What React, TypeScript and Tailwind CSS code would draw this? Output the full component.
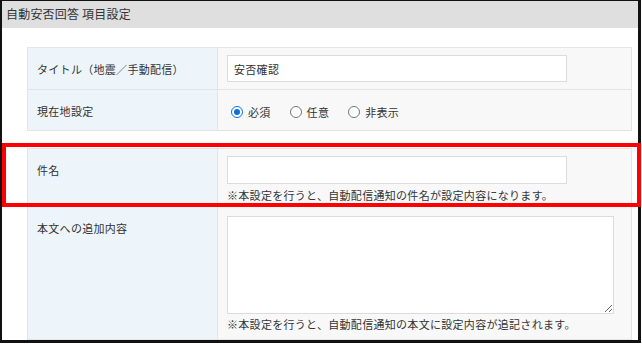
import React from "react";

const font = { fontFamily: '"Noto Sans CJK JP", "Noto Sans", sans-serif' };

function Radio({ checked, label }: { checked?: boolean; label: string }) {
  return (
    <label className="flex items-center gap-[5px]">
      {checked ? (
        <span className="flex h-[12px] w-[12px] items-center justify-center rounded-full border-[1.5px] border-[#0b6fe0] bg-white">
          <span className="h-[6px] w-[6px] rounded-full bg-[#0b6fe0]" />
        </span>
      ) : (
        <span className="h-[12px] w-[12px] rounded-full border border-[#767676] bg-white" />
      )}
      <span>{label}</span>
    </label>
  );
}

function Row({ label, children, h, last }: { label: string; children: React.ReactNode; h: string; last?: boolean }) {
  return (
    <div className={`flex ${h} ${last ? "" : "border-b border-[#e4e4e4]"}`}>
      <div className="w-[190px] shrink-0 border-r border-[#e4e4e4] bg-[#edf5fb] pl-[9px] pt-[13px] leading-[16px]">{label}</div>
      <div className="flex-1 bg-[#f8f8f8] pl-[9px]">{children}</div>
    </div>
  );
}

export default function App() {
  return (
    <div className="relative h-[344px] w-[642px] bg-white text-[11px] tracking-[0.3px] text-[#333]" style={font}>
      <div className="flex h-[343px] w-[641px] flex-col border-b-[3px] border-l-2 border-r-[3px] border-t border-[#111]">
        <div className="h-[27px] shrink-0 bg-[#dfdfdf] pl-[4px] text-[12px] leading-[26px] tracking-[0.2px] text-[#333]">自動安否回答 項目設定</div>
        <div className="flex flex-1 flex-col pl-[25px] pr-[6px] pt-[19px]">
          <div className="border border-[#e4e4e4]">
            <Row label="タイトル（地震／手動配信）" h="h-[42px]">
              <div className="pt-[7px]">
                <input readOnly value="安否確認" className="h-[27px] w-[340px] border border-[#dcdcdc] bg-white px-[6px] text-[11px] tracking-[0.3px] text-[#333] outline-none" style={font} />
              </div>
            </Row>
            <Row label="現在地設定" h="h-[40px]" last>
              <div className="flex gap-[19px] pl-[4px] pt-[14px] leading-[16px]">
                <Radio checked label="必須" />
                <Radio label="任意" />
                <Radio label="非表示" />
              </div>
            </Row>
          </div>
          <div className="mt-[17px] flex flex-1 flex-col border border-[#e4e4e4]">
            <Row label="件名" h="h-[58px]">
              <div className="pt-[7px]">
                <input readOnly value="" className="h-[28px] w-[340px] border border-[#dcdcdc] bg-white px-[6px] outline-none" />
                <div className="mt-[3px] leading-[16px]">※本設定を行うと、自動配信通知の件名が設定内容になります。</div>
              </div>
            </Row>
            <Row label="本文への追加内容" h="flex-1" last>
              <div className="pt-[9px]">
                <textarea readOnly className="block h-[98px] w-[387px] border border-[#dcdcdc] bg-white outline-none" />
                <div className="mt-[2px] leading-[16px]">※本設定を行うと、自動配信通知の本文に設定内容が追記されます。</div>
              </div>
            </Row>
          </div>
        </div>
      </div>
      <div className="absolute left-[2px] top-[143px] h-[64px] w-[639px] border-4 border-[#ff0000]" />
    </div>
  );
}
